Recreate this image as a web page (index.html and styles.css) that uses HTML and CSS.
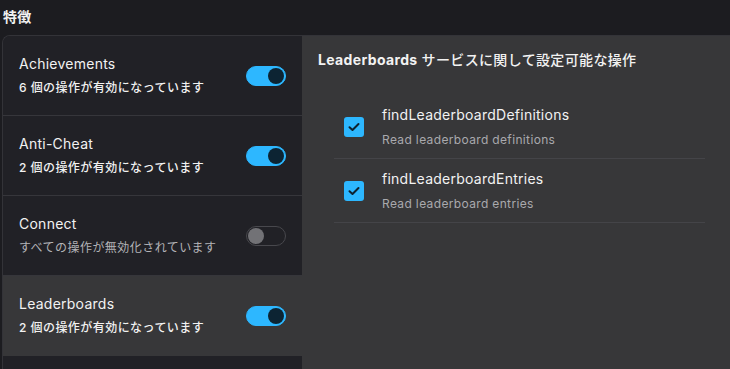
FILE: index.html
```html
<!DOCTYPE html>
<html lang="ja">
<head>
    <meta charset="UTF-8">
    <title>特徴</title>
    <link rel="stylesheet" href="styles.css">
</head>
<body>
    <div class="header">特徴</div>

    <div class="card">
        <ul class="services">
            <li class="service">
                <div class="service-text">
                    <div class="service-name">Achievements</div>
                    <div class="service-status">6 個の操作が有効になっています</div>
                </div>
                <span class="toggle on"></span>
            </li>
            <li class="service">
                <div class="service-text">
                    <div class="service-name">Anti-Cheat</div>
                    <div class="service-status">2 個の操作が有効になっています</div>
                </div>
                <span class="toggle on"></span>
            </li>
            <li class="service">
                <div class="service-text">
                    <div class="service-name">Connect</div>
                    <div class="service-status off">すべての操作が無効化されています</div>
                </div>
                <span class="toggle"></span>
            </li>
            <li class="service selected">
                <div class="service-text">
                    <div class="service-name">Leaderboards</div>
                    <div class="service-status">2 個の操作が有効になっています</div>
                </div>
                <span class="toggle on"></span>
            </li>
        </ul>

        <div class="detail">
            <h2 class="detail-title"><b>Leaderboards</b> サービスに関して設定可能な操作</h2>
            <ul class="actions">
                <li class="action">
                    <span class="checkbox">
                        <svg width="12" height="10" viewBox="0 0 12 10"><path d="M1.5 5.2 L4.5 8 L10.5 2" fill="none" stroke="#0d2230" stroke-width="2" stroke-linecap="round" stroke-linejoin="round"/></svg>
                    </span>
                    <div>
                        <div class="action-name">findLeaderboardDefinitions</div>
                        <div class="action-desc">Read leaderboard definitions</div>
                    </div>
                </li>
                <li class="action">
                    <span class="checkbox">
                        <svg width="12" height="10" viewBox="0 0 12 10"><path d="M1.5 5.2 L4.5 8 L10.5 2" fill="none" stroke="#0d2230" stroke-width="2" stroke-linecap="round" stroke-linejoin="round"/></svg>
                    </span>
                    <div>
                        <div class="action-name">findLeaderboardEntries</div>
                        <div class="action-desc">Read leaderboard entries</div>
                    </div>
                </li>
            </ul>
        </div>
    </div>
</body>
</html>
```

FILE: styles.css
```css
body {
    margin: 0;
    height: 369px;
    overflow: hidden;
    background-color: #1c1c20;
    color: #f2f2f2;
    font-family: Inter, "Noto Sans CJK JP", sans-serif;
    letter-spacing: 0.25px;
}

.header {
    height: 35px;
    line-height: 33px;
    padding-left: 3px;
    font-size: 14px;
    font-weight: 600;
}

.card {
    display: grid;
    grid-template-columns: 299px 1fr;
    height: 334px;
    margin-left: 2px;
    border: 1px solid #333338;
    border-right: none;
    border-bottom: none;
    border-top-left-radius: 8px;
    overflow: hidden;
    background-color: #212126;
}

.services {
    list-style: none;
    margin: 0;
    padding: 0;
    background-color: #212126;
}

.service {
    display: flex;
    align-items: center;
    justify-content: space-between;
    height: 79px;
    padding: 0 16px;
    border-bottom: 1px solid #36363b;
}

.service.selected {
    background-color: #373739;
    border-bottom-color: #373739;
}

.service-name {
    font-size: 14px;
    line-height: 20px;
    margin-bottom: 5px;
}

.service-status {
    font-size: 12px;
    line-height: 18px;
    font-weight: 500;
    letter-spacing: 0.45px;
}

.service-status.off {
    color: #b4b4b8;
    font-weight: 400;
}

.toggle {
    position: relative;
    box-sizing: border-box;
    width: 40px;
    height: 20px;
    border-radius: 10px;
    border: 1px solid #48484d;
    background-color: transparent;
}

.toggle::after {
    content: "";
    position: absolute;
    top: 1px;
    left: 1px;
    width: 16px;
    height: 16px;
    border-radius: 50%;
    background-color: #727276;
}

.toggle.on {
    border-color: #2db7ff;
    background-color: #2db7ff;
}

.toggle.on::after {
    left: auto;
    right: 1px;
    background-color: #0c2433;
}

.detail {
    background-color: #373739;
    padding: 14px 25px 0 16px;
}

.detail-title {
    margin: 0 0 25px;
    font-size: 14px;
    line-height: 20px;
    font-weight: 500;
    letter-spacing: 0.35px;
}

.detail-title b {
    font-weight: 700;
}

.actions {
    list-style: none;
    margin: 0 0 0 16px;
    padding: 0;
}

.action {
    display: flex;
    align-items: center;
    gap: 18px;
    padding: 10px 10px 9px;
    border-bottom: 1px solid #444448;
}

.checkbox {
    display: flex;
    align-items: center;
    justify-content: center;
    width: 20px;
    height: 20px;
    border-radius: 3px;
    background-color: #2db7ff;
}

.action-name {
    font-size: 14px;
    line-height: 20px;
    margin-bottom: 6px;
}

.action-desc {
    font-size: 12px;
    line-height: 18px;
    color: #a9a9ad;
    letter-spacing: 0.35px;
}
```
